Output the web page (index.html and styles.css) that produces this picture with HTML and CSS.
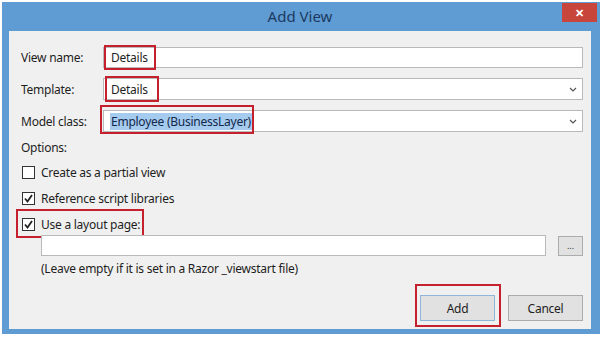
FILE: index.html
```html
<html>

<head>
    <title>Add View</title>
    <link rel="stylesheet" href="styles.css">
</head>
<body>
<div class="window">
    <div class="titlebar">
        <span class="title">Add View</span>
        <span class="close">&#x2715;</span>
    </div>
    <div class="content">
        <div class="field-row">
            <label>View name:</label>
            <div class="input">
                Details
                <span class="mark mark-name"></span>
            </div>
        </div>
        <div class="field-row select-row">
            <label>Template:</label>
            <div class="input">
                Details
                <svg class="chevron" width="8" height="5" viewBox="0 0 8 5"><polyline points="1,1 4,4 7,1" fill="none" stroke="#555" stroke-width="1.2"/></svg>
                <span class="mark mark-template"></span>
            </div>
        </div>
        <div class="field-row select-row">
            <label>Model class:</label>
            <div class="input">
                <span class="selected">Employee (BusinessLayer)</span>
                <svg class="chevron" width="8" height="5" viewBox="0 0 8 5"><polyline points="1,1 4,4 7,1" fill="none" stroke="#555" stroke-width="1.2"/></svg>
                <span class="mark mark-model"></span>
            </div>
        </div>

        <div class="options-label">Options:</div>

        <div class="check-row">
            <span class="box"></span>
            Create as a partial view
        </div>
        <div class="check-row">
            <span class="box"><svg width="11" height="11" viewBox="0 0 11 11"><polyline points="2,5.5 4.5,8.5 9,2" fill="none" stroke="#222" stroke-width="1.8"/></svg></span>
            Reference script libraries
        </div>
        <div class="check-row">
            <span class="box"><svg width="11" height="11" viewBox="0 0 11 11"><polyline points="2,5.5 4.5,8.5 9,2" fill="none" stroke="#222" stroke-width="1.8"/></svg></span>
            Use a layout page:
            <span class="mark mark-layout"></span>
        </div>

        <div class="layout-row">
            <div class="input"></div>
            <button class="browse" type="button">...</button>
        </div>
        <div class="hint">(Leave empty if it is set in a Razor _viewstart file)</div>

        <div class="buttons">
            <div class="btn-wrap">
                <button class="btn default" type="button">Add</button>
                <span class="mark mark-add"></span>
            </div>
            <button class="btn" type="button">Cancel</button>
        </div>
    </div>
</div>
</body>
</html>
```

FILE: styles.css
```css
html, body {
    margin: 0;
    background-color: #fff;
    color: #1e1e1e;
    font-family: "Noto Sans", "Open Sans", sans-serif;
    font-size: 12px;
    letter-spacing: -0.25px;
}

.window {
    margin: 2px 0 0 2px;
    width: 598px;
    height: 332px;
    box-sizing: border-box;
    padding: 0 9px 5px 7px;
    background-color: #5f9cd3;
    display: flex;
    flex-direction: column;
}

.titlebar {
    position: relative;
    height: 29px;
    display: flex;
    align-items: center;
    justify-content: center;
}

.title {
    font-size: 15px;
    letter-spacing: 0;
    color: #1b3a61;
    margin-top: -2px;
}

.close {
    position: absolute;
    top: 1px;
    right: -6px;
    width: 35px;
    height: 19px;
    background-color: #c7453b;
    color: #fff;
    font-size: 11px;
    font-weight: bold;
    display: flex;
    align-items: center;
    justify-content: center;
}

.content {
    flex: 1;
    background-color: #f0f0f0;
    padding: 16px 8px 0 12px;
}

.field-row {
    display: flex;
    align-items: center;
    height: 21px;
    margin-bottom: 10px;
}

.select-row {
    height: 22px;
}

.field-row label {
    width: 82px;
    flex-shrink: 0;
}

.input {
    position: relative;
    flex: 1;
    height: 100%;
    box-sizing: border-box;
    background-color: #fff;
    border: 1px solid #b9b9b9;
    padding-left: 7px;
    display: flex;
    align-items: center;
}

.chevron {
    position: absolute;
    right: 5px;
    top: 8px;
}

.selected {
    background-color: #a5cbee;
    color: #13294b;
    padding: 0 1px;
    margin-left: -1px;
}

.mark {
    position: absolute;
    border: 2px solid #c4202e;
}

.mark-name     { left: 0;    top: -3px; width: 48px;  height: 21px; }
.mark-template { left: 1px;  top: -3px; width: 50px;  height: 22px; }
.mark-model    { left: -4px; top: -6px; width: 150px; height: 25px; }
.mark-layout   { left: -5px; top: -5px; width: 124px; height: 25px; }
.mark-add      { left: -5px; top: -11px; width: 82px; height: 39px; }

.options-label {
    line-height: 16px;
    margin-top: -2px;
}

.check-row {
    position: relative;
    display: flex;
    align-items: center;
    height: 20px;
    margin-top: 6px;
}

.box {
    width: 11px;
    height: 11px;
    border: 1px solid #333;
    background-color: #fff;
    margin: 0 6px 0 1px;
    display: flex;
    align-items: center;
    justify-content: center;
}

.layout-row {
    display: flex;
    align-items: center;
    height: 21px;
    margin: 1px 0 0 20px;
}

.layout-row .input {
    padding: 0;
}

.browse {
    width: 25px;
    height: 20px;
    margin-left: 12px;
    padding: 0;
    border: 1px solid #acacac;
    background-color: #e1e1e1;
    font-family: inherit;
    font-size: 9px;
    color: #333;
}

.hint {
    line-height: 16px;
    margin: 5px 0 0 20px;
}

.buttons {
    display: flex;
    justify-content: flex-end;
    margin-top: 18px;
    gap: 13px;
}

.btn-wrap {
    position: relative;
}

.btn {
    width: 75px;
    height: 26px;
    border: 1px solid #acacac;
    background-color: #e1e1e1;
    font-family: inherit;
    font-size: 12px;
    letter-spacing: -0.25px;
    color: #1e1e1e;
    padding: 0;
}

.btn.default {
    border-color: #8fb5d8;
}
```
